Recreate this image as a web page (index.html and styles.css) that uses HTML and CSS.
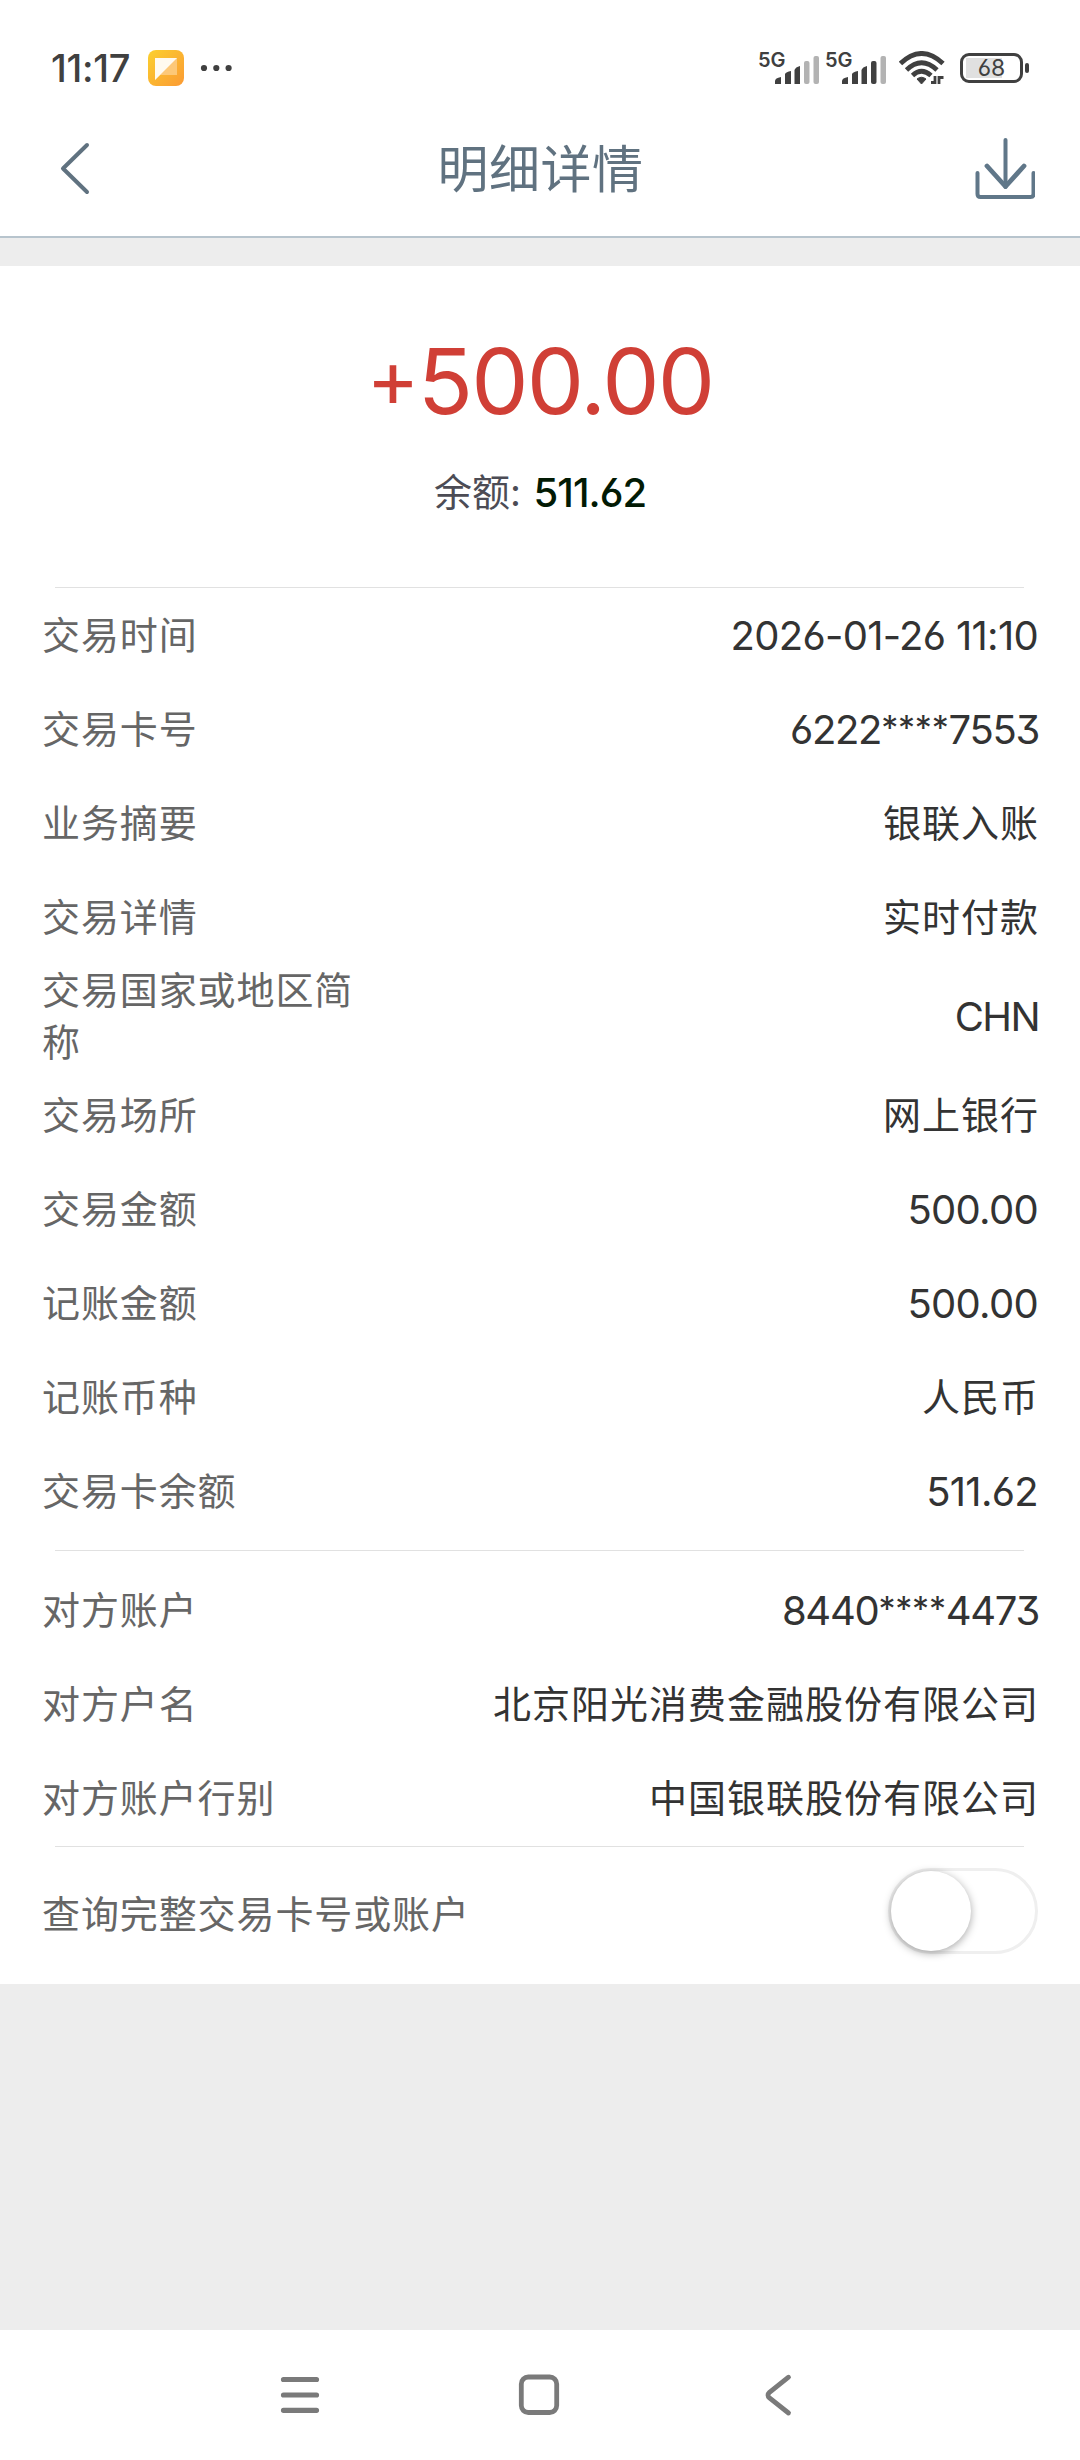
FILE: index.html
```
<!DOCTYPE html>
<html lang="zh-CN">
<head>
    <meta charset="UTF-8">
    <meta name="viewport" content="width=device-width, initial-scale=1.0">
    <title>明细详情</title>
    <link rel="stylesheet" href="styles.css">
</head>
<body>
    <div class="status-bar">
        <div class="status-left">
            <span class="clock">11:17</span>
            <svg class="app-icon" width="36" height="36" viewBox="0 0 36 36">
                <defs>
                    <linearGradient id="appBg" x1="0" y1="0" x2="1" y2="1">
                        <stop offset="0" stop-color="#fbd02e"/>
                        <stop offset="1" stop-color="#fb9a34"/>
                    </linearGradient>
                </defs>
                <rect width="36" height="36" rx="8" fill="url(#appBg)"/>
                <path d="M7 8h22v17H12l-5 5z" fill="#fdc878"/>
                <path d="M7 8h22L7 30z" fill="#fffaf0"/>
            </svg>
            <svg width="32" height="8" viewBox="0 0 32 8" fill="#404040">
                <circle cx="4" cy="4" r="3.1"/>
                <circle cx="16.3" cy="4" r="3.1"/>
                <circle cx="28.6" cy="4" r="3.1"/>
            </svg>
        </div>
        <div class="status-right">
            <div class="signal">
                <span class="network">5G</span>
                <svg class="bars" width="44" height="28" viewBox="0 0 44 28">
                    <path d="M0 28v-3q0-3 6-4v7z" fill="#404040"/>
                    <path d="M10 28V18q1-2 6-3v13z" fill="#404040"/>
                    <path d="M19.500 28V14q1-3 5.500-4v18z" fill="#404040"/>
                    <rect x="29" y="5" width="5.500" height="23" rx="2" fill="#b3b3b3"/>
                    <rect x="38.500" y="0" width="5.500" height="28" rx="2" fill="#b3b3b3"/>
                </svg>
            </div>
            <div class="signal">
                <span class="network">5G</span>
                <svg class="bars" width="44" height="28" viewBox="0 0 44 28">
                    <path d="M0 28v-3q0-3 6-4v7z" fill="#404040"/>
                    <path d="M10 28V18q1-2 6-3v13z" fill="#404040"/>
                    <path d="M19.500 28V14q1-3 5.500-4v18z" fill="#404040"/>
                    <rect x="29" y="5" width="5.500" height="23" rx="2" fill="#404040"/>
                    <rect x="38.500" y="0" width="5.500" height="28" rx="2" fill="#b3b3b3"/>
                </svg>
            </div>
            <svg class="wifi" width="46" height="34" viewBox="0 0 46 34">
                <g fill="none" stroke="#404040" stroke-width="4.800">
                    <path d="M1.500 12.500Q22.500-7.500 44 12.500"/>
                    <path d="M7.500 19Q22.500 4.500 38 19"/>
                    <path d="M13.500 24.500Q22.500 16 32 24.500"/>
                </g>
                <path d="M18 28q4.500-3.500 9 0l-4.500 5z" fill="#404040" stroke="#404040" stroke-linejoin="round"/>
                <path d="M32 31.500h4V25M40 33v-6.500h4.500" fill="none" stroke="#404040" stroke-width="2.800"/>
            </svg>
            <div class="battery">
                <span class="battery-level">68</span>
            </div>
        </div>
    </div>

    <header class="title-bar">
        <svg class="back" width="30" height="54" viewBox="0 0 30 54">
            <path d="M27 4L3 27.500L27 51" fill="none" stroke="#607280" stroke-width="4" stroke-linecap="round" stroke-linejoin="round"/>
        </svg>
        <h1>明细详情</h1>
        <svg class="download" width="60" height="62" viewBox="0 0 60 62">
            <g fill="none" stroke="#607789" stroke-width="4" stroke-linecap="round" stroke-linejoin="round">
                <path d="M30.500 3v47"/>
                <path d="M12 29l18.500 20.500L49 29" stroke-width="4.800"/>
                <path d="M2.500 36v21q0 3 3 3h50q3 0 3-3V36"/>
            </g>
        </svg>
    </header>

    <main class="container">
        <section class="summary">
            <div class="amount"><span class="sign">+</span>500.00</div>
            <div class="balance">余额: <span class="balance-value">511.62</span></div>
        </section>

        <div class="group">
            <div class="row"><span class="label">交易时间</span><span class="value num">2026-01-26 11:10</span></div>
            <div class="row"><span class="label">交易卡号</span><span class="value num card">6222<span class="mask">****</span>7553</span></div>
            <div class="row"><span class="label">业务摘要</span><span class="value">银联入账</span></div>
            <div class="row"><span class="label">交易详情</span><span class="value">实时付款</span></div>
            <div class="row"><span class="label">交易国家或地区简称</span><span class="value num code">CHN</span></div>
            <div class="row"><span class="label">交易场所</span><span class="value">网上银行</span></div>
            <div class="row"><span class="label">交易金额</span><span class="value num">500.00</span></div>
            <div class="row"><span class="label">记账金额</span><span class="value num">500.00</span></div>
            <div class="row"><span class="label">记账币种</span><span class="value">人民币</span></div>
            <div class="row"><span class="label">交易卡余额</span><span class="value num">511.62</span></div>
        </div>

        <div class="group account">
            <div class="row"><span class="label">对方账户</span><span class="value num card">8440<span class="mask">****</span>4473</span></div>
            <div class="row"><span class="label">对方户名</span><span class="value">北京阳光消费金融股份有限公司</span></div>
            <div class="row"><span class="label">对方账户行别</span><span class="value">中国银联股份有限公司</span></div>
        </div>

        <div class="group query">
            <span class="query-label">查询完整交易卡号或账户</span>
            <div class="switch"><div class="knob"></div></div>
        </div>
    </main>

    <nav class="nav-bar">
        <svg width="60" height="60" viewBox="0 0 60 60" fill="none" stroke="#7a7a7a" stroke-width="5.200" stroke-linecap="round">
            <path d="M13.500 14.500h33M13.500 30h33M13.500 45.300h33"/>
        </svg>
        <svg width="60" height="60" viewBox="0 0 60 60" fill="none" stroke="#7a7a7a" stroke-width="4.800">
            <rect x="11.300" y="12" width="35.400" height="35.500" rx="7"/>
        </svg>
        <svg width="60" height="60" viewBox="0 0 60 60" fill="none" stroke="#7a7a7a" stroke-width="4.800" stroke-linecap="round">
            <path d="M38.500 12.200L19.500 27.300Q16.500 30.200 19.500 33L38.500 48"/>
        </svg>
    </nav>
</body>
</html>
```
FILE: styles.css
```
body {
    margin: 0;
    min-height: 2460px;
    display: flex;
    flex-direction: column;
    background-color: #ededed;
    color: #333;
    font-family: Inter, "Noto Sans CJK SC", sans-serif;
    font-size: 38px;
}
svg {
    display: block;
}
.status-bar {
    height: 100px;
    box-sizing: border-box;
    padding: 36px 51px 0 51px;
    display: flex;
    justify-content: space-between;
    align-items: center;
    background-color: #fff;
    color: #404040;
}
.status-left {
    display: flex;
    align-items: center;
}
.clock {
    width: 97px;
    font-size: 38px;
    font-weight: 500;
    letter-spacing: -0.3px;
    white-space: nowrap;
}
.app-icon {
    margin-right: 16px;
}
.status-right {
    display: flex;
    align-items: center;
}
.signal {
    position: relative;
    width: 60px;
    height: 32px;
    margin-right: 7px;
    display: flex;
    justify-content: flex-end;
    align-items: flex-end;
}
.network {
    position: absolute;
    left: -1px;
    top: 0;
    font-size: 20px;
    line-height: 16px;
    font-weight: 600;
}
.wifi {
    margin: 0 15px 0 6px;
}
.battery {
    position: relative;
    width: 63px;
    height: 30px;
    box-sizing: border-box;
    border: 3px solid #404040;
    border-radius: 9px;
    display: flex;
    align-items: center;
    justify-content: center;
    background: linear-gradient(#e0e0e0, #e0e0e0) 3px 2px / 36px 20px no-repeat;
    margin-right: 6px;
}
.battery::after {
    content: "";
    position: absolute;
    right: -9px;
    top: 7px;
    width: 4px;
    height: 10px;
    border-radius: 2px;
    background-color: #404040;
}
.battery-level {
    font-size: 23px;
    line-height: 24px;
}
.title-bar {
    height: 138px;
    box-sizing: border-box;
    border-bottom: 2px solid #b7c4cd;
    padding: 0 45px 0 60px;
    display: flex;
    justify-content: space-between;
    align-items: center;
    background-color: #fff;
}
.title-bar h1 {
    margin: -4px 0 0 16px;
    font-size: 51px;
    font-weight: 400;
    letter-spacing: 0.5px;
    color: #607280;
}
.container {
    margin-top: 28px;
    height: 1718px;
    background-color: #fff;
}
.summary {
    height: 321px;
    box-sizing: border-box;
    padding-top: 59px;
    text-align: center;
}
.amount {
    font-size: 91px;
    line-height: 112px;
    letter-spacing: -1.8px;
    color: #d03f36;
}
.sign {
    font-size: 80px;
    line-height: 1;
    vertical-align: 7px;
}
.balance {
    margin-top: 28px;
    line-height: 54px;
    color: #4c4c55;
}
.balance-value {
    position: relative;
    top: 1px;
    font-size: 40px;
    font-weight: 500;
    letter-spacing: -1px;
    margin-left: 2px;
    color: #021a04;
}
.group {
    position: relative;
    padding: 1px 42px 12px;
}
/* inset hairline above each group */
.group::before {
    content: "";
    position: absolute;
    left: 55px;
    right: 56px;
    top: 0;
    height: 1px;
    background-color: #e1e1e1;
}
.account {
    padding-top: 13px;
    padding-bottom: 1px;
}
.row {
    min-height: 94px;
    display: flex;
    justify-content: space-between;
    align-items: center;
}
.label {
    width: 320px;
    line-height: 52px;
    letter-spacing: 0.9px;
    color: #666;
}
.value {
    line-height: 52px;
    letter-spacing: 1px;
    margin-right: -1px;
    white-space: nowrap;
}
.num {
    padding-top: 2px;
    font-size: 40px;
    letter-spacing: -0.7px;
    margin-right: 0;
}
.card {
    letter-spacing: -1.3px;
    margin-right: -1px;
}
.mask {
    font-size: 34px;
    line-height: 1;
    letter-spacing: -0.2px;
    vertical-align: 4px;
}
.code {
    letter-spacing: -1.6px;
    margin-right: -1px;
}
.amount, .num, .balance-value, .battery-level {
    font-feature-settings: "cv03", "cv09", "calt" 0;
}
.query {
    padding: 22px 42px 0;
    display: flex;
    justify-content: space-between;
    align-items: flex-start;
}
.query-label {
    line-height: 92px;
    letter-spacing: 0.9px;
    color: #666;
}
.switch {
    width: 150px;
    height: 86px;
    box-sizing: border-box;
    border: 3px solid #efefef;
    border-radius: 43px;
}
.knob {
    width: 80px;
    height: 80px;
    border-radius: 50%;
    background-color: #fff;
    box-shadow: 0 2px 8px rgba(0, 0, 0, 0.35);
}
.nav-bar {
    height: 130px;
    box-sizing: border-box;
    padding-top: 35px;
    margin-top: auto;
    display: flex;
    justify-content: center;
    gap: 180px;
    background-color: #fff;
}
```
